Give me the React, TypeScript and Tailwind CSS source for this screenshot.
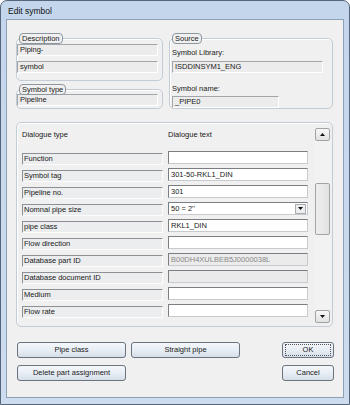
const font = { fontFamily: '"Liberation Sans", Arial, sans-serif' };

type Row = { label: string; value?: string; kind?: "text" | "select" | "disabled" };

const rows: Row[] = [
  { label: "Function", value: "" },
  { label: "Symbol tag", value: "301-50-RKL1_DIN" },
  { label: "Pipeline no.", value: "301" },
  { label: "Nomnal pipe size", value: "50 = 2''", kind: "select" },
  { label: "pipe class", value: "RKL1_DIN" },
  { label: "Flow direction", value: "" },
  { label: "Database part ID", value: "B00DH4XULBEB5J0000038L", kind: "disabled" },
  { label: "Database document ID", value: "", kind: "disabled" },
  { label: "Medium", value: "" },
  { label: "Flow rate", value: "" },
];

const Group = ({ title, className, children }: { title?: string; className?: string; children: React.ReactNode }) => (
  <div className={`relative rounded-[5px] border border-[#c3ccd5] shadow-[inset_1px_1px_0_#fff] ${className ?? ""}`}>
    {title && (
      <span className="absolute left-[2px] top-[-6px] flex h-[11px] items-center rounded-[4px] border border-[#8b96a1] bg-[#f0f0f0] px-[2px] text-[7.5px] text-[#1a1a1a]">
        {title}
      </span>
    )}
    {children}
  </div>
);

// sunken read-only box
const Static = ({ text, className }: { text: string; className?: string }) => (
  <div
    className={`flex h-[12px] items-center border border-[#a2a6ab] border-b-white border-r-white bg-[#ececec] pl-[2px] text-[7.5px] text-[#1a1a1a] ${className ?? ""}`}
  >
    {text}
  </div>
);

const Btn = ({ children, w, focus }: { children: React.ReactNode; w: string; focus?: boolean }) => (
  <div
    className={`${w} flex h-[16px] items-center justify-center rounded-[3px] border border-[#6a737e] bg-gradient-to-b from-[#f4f7fb] via-[#e8eef5] to-[#d6dee8] text-[7.5px] text-[#1a1a1a]`}
  >
    {focus ? (
      <span className="flex h-[12px] w-[46px] items-center justify-center border border-dotted border-[#555]">{children}</span>
    ) : (
      children
    )}
  </div>
);

const Field = ({ row }: { row: Row }) => {
  if (row.kind === "select") {
    return (
      <div className="flex h-[13px] w-[140px] items-center border border-[#7a7e83] border-b-[#c8cbce] border-r-[#c8cbce] bg-white pl-[2px] text-[7.5px]">
        <span className="flex-1">{row.value}</span>
        <span className="mr-[1px] flex h-[10px] w-[11px] items-center justify-center border border-[#a9adb2] bg-[#eceef0]">
          <svg width="5" height="3" viewBox="0 0 5 3">
            <path d="M0 0h5L2.5 3z" fill="#111" />
          </svg>
        </span>
      </div>
    );
  }
  const disabled = row.kind === "disabled";
  return (
    <div
      className={`flex h-[13px] w-[140px] items-center border border-[#7a7e83] border-b-[#c8cbce] border-r-[#c8cbce] pl-[2px] text-[7.5px] ${
        disabled ? "bg-[#ebebeb] text-[#8a8a8a]" : "bg-white text-[#1a1a1a]"
      }`}
    >
      {row.value}
    </div>
  );
};

export default function App() {
  return (
    <div
      style={font}
      className="flex h-[405px] w-[350px] flex-col rounded-t-[7px] border border-[#56667a] bg-gradient-to-b from-[#c4d6ec] to-[#cddcee] text-[#1a1a1a]"
    >
      <div className="flex h-[18px] items-center pl-[7px] pt-[2px] text-[8.5px] text-[#111]">Edit symbol</div>

      <div className="mx-[5px] mb-[6px] flex h-[379px] flex-col border border-[#8da1b6] bg-[#f0f0f0] pl-[9px] pr-[10px]">
        {/* top groups */}
        <div className="mt-[18px] flex gap-[6px]">
          <div className="flex w-[147px] flex-col gap-[8px]">
            <Group title="Description" className="h-[43px]">
              <div className="flex flex-col gap-[5px] pt-[5px]">
                <Static text="Piping-" className="w-[141px]" />
                <Static text="symbol" className="w-[141px]" />
              </div>
            </Group>
            <Group title="Symbol type" className="h-[20px]">
              <div className="pt-[4px]">
                <Static text="Pipeline" className="w-[141px]" />
              </div>
            </Group>
          </div>

          <Group title="Source" className="h-[71px] flex-1">
            <div className="flex flex-col pl-[2px] pt-[7px] text-[7.5px]">
              <div className="leading-[13px]">Symbol Library:</div>
              <Static text="ISDDINSYM1_ENG" className="mt-[2px] w-[151px]" />
              <div className="mt-[9px] leading-[13px]">Symbol name:</div>
              <Static text="_PIPE0" className="mt-[1px] w-[107px]" />
            </div>
          </Group>
        </div>

        {/* dialogue list */}
        <Group className="mt-[13px] h-[205px]">
          <div className="flex pl-[5px] pr-[2px] pt-[5px]">
            <div className="flex flex-1 flex-col">
              <div className="flex text-[7.5px] leading-[13px]">
                <span className="w-[146px]">Dialogue type</span>
                <span>Dialogue text</span>
              </div>
              <div className="mt-[10px] flex flex-col">
                {rows.map((r) => (
                  <div key={r.label} className="flex h-[17px] items-start gap-[5px]">
                    <div className="mt-[2px] flex h-[12px] w-[141px] items-center border border-[#8d9196] border-b-[#fcfcfc] border-r-[#fcfcfc] bg-[#ebedef] pl-[1px] text-[7.5px]">
                      {r.label}
                    </div>
                    <Field row={r} />
                  </div>
                ))}
              </div>
            </div>

            {/* scrollbar */}
            <div className="flex h-[195px] w-[15px] flex-col bg-[#f2f2f2]">
              <div className="flex h-[13px] items-center justify-center rounded-[2px] border border-[#9ea3a8] bg-gradient-to-b from-[#f7f7f7] to-[#e2e2e2]">
                <svg width="5" height="3" viewBox="0 0 5 3">
                  <path d="M0 3h5L2.5 0z" fill="#111" />
                </svg>
              </div>
              <div className="h-[42px]" />
              <div className="h-[52px] rounded-[2px] border border-[#a0a4a8] bg-gradient-to-r from-[#eeeeee] to-[#e2e2e2]" />
              <div className="flex-1" />
              <div className="flex h-[13px] items-center justify-center rounded-[2px] border border-[#9ea3a8] bg-gradient-to-b from-[#f7f7f7] to-[#e2e2e2]">
                <svg width="5" height="3" viewBox="0 0 5 3">
                  <path d="M0 0h5L2.5 3z" fill="#111" />
                </svg>
              </div>
            </div>
          </div>
        </Group>

        {/* buttons */}
        <div className="mt-[15px] flex justify-between pl-[1px]">
          <div className="flex flex-col gap-[7px]">
            <div className="flex gap-[5px]">
              <Btn w="w-[109px]">Pipe class</Btn>
              <Btn w="w-[109px]">Straight pipe</Btn>
            </div>
            <Btn w="w-[109px]">Delete part assignment</Btn>
          </div>
          <div className="mr-[-1px] flex flex-col gap-[7px]">
            <Btn w="w-[52px]" focus>
              OK
            </Btn>
            <Btn w="w-[52px]">Cancel</Btn>
          </div>
        </div>
      </div>
    </div>
  );
}
